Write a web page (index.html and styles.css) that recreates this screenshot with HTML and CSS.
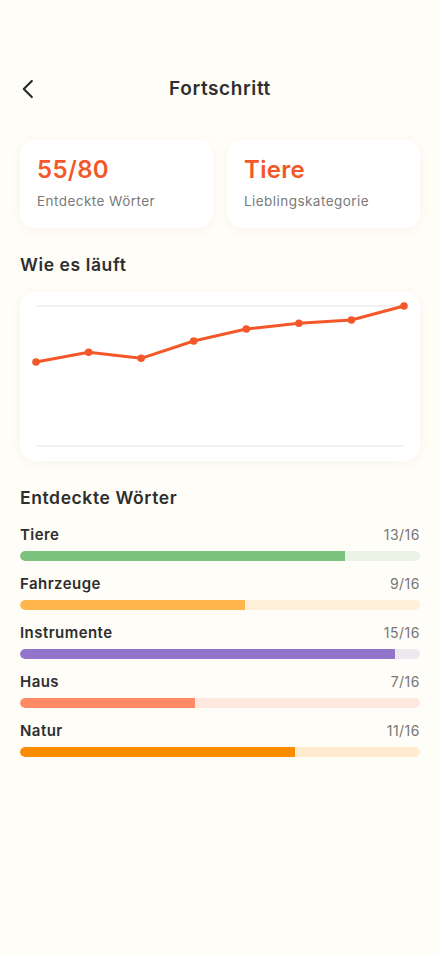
FILE: index.html
```html
<!DOCTYPE html>
<html lang="de">
<head>
<meta charset="utf-8">
<title>Fortschritt</title>
<link rel="stylesheet" href="styles.css">
</head>
<body>
<div class="page">
  <header class="header">
    <button class="back" aria-label="Zurück">
      <svg width="24" height="24" viewBox="0 0 24 24"><path d="M11.8 4 L3.8 12 L11.8 20" fill="none" stroke="#2b2b2b" stroke-width="2.2" stroke-linecap="round" stroke-linejoin="round"/></svg>
    </button>
    <h1 class="title">Fortschritt</h1>
  </header>

  <section class="stats">
    <div class="card stat">
      <div class="stat-value">55/80</div>
      <div class="stat-label">Entdeckte Wörter</div>
    </div>
    <div class="card stat">
      <div class="stat-value">Tiere</div>
      <div class="stat-label">Lieblingskategorie</div>
    </div>
  </section>

  <h2 class="section-title first">Wie es läuft</h2>
  <div class="card chart">
    <svg width="400" height="169" viewBox="0 0 400 169">
      <line x1="16" y1="14" x2="384" y2="14" stroke="#ECECF1" stroke-width="1.5"/>
      <line x1="16" y1="154" x2="384" y2="154" stroke="#ECECF1" stroke-width="1.5"/>
      <polyline fill="none" stroke="#F4572A" stroke-width="3" stroke-linejoin="round" stroke-linecap="round"
        points="16,70 68.6,60.3 121.1,66.3 173.7,49 226.3,37 278.9,31.3 331.4,28 384,14"/>
      <g fill="#F4572A">
        <circle cx="16" cy="70" r="3.8"/>
        <circle cx="68.6" cy="60.3" r="3.8"/>
        <circle cx="121.1" cy="66.3" r="3.8"/>
        <circle cx="173.7" cy="49" r="3.8"/>
        <circle cx="226.3" cy="37" r="3.8"/>
        <circle cx="278.9" cy="31.3" r="3.8"/>
        <circle cx="331.4" cy="28" r="3.8"/>
        <circle cx="384" cy="14" r="3.8"/>
      </g>
    </svg>
  </div>

  <h2 class="section-title">Entdeckte Wörter</h2>
  <ul class="progress-list">
    <li class="progress-row">
      <div class="row-head"><span class="row-label">Tiere</span><span class="row-count">13/16</span></div>
      <div class="track green"><div class="fill" style="width:81.25%"></div></div>
    </li>
    <li class="progress-row">
      <div class="row-head"><span class="row-label">Fahrzeuge</span><span class="row-count">9/16</span></div>
      <div class="track amber"><div class="fill" style="width:56.25%"></div></div>
    </li>
    <li class="progress-row">
      <div class="row-head"><span class="row-label">Instrumente</span><span class="row-count">15/16</span></div>
      <div class="track purple"><div class="fill" style="width:93.75%"></div></div>
    </li>
    <li class="progress-row">
      <div class="row-head"><span class="row-label">Haus</span><span class="row-count">7/16</span></div>
      <div class="track coral"><div class="fill" style="width:43.75%"></div></div>
    </li>
    <li class="progress-row">
      <div class="row-head"><span class="row-label">Natur</span><span class="row-count">11/16</span></div>
      <div class="track orange"><div class="fill" style="width:68.75%"></div></div>
    </li>
  </ul>
</div>
</body>
</html>
```

FILE: styles.css
```css
* { box-sizing: border-box; }
html, body { margin: 0; padding: 0; }
body {
  background: #FFFDF7;
  font-family: Inter, "Noto Sans", "Liberation Sans", sans-serif;
  color: #2B2B2B;
  width: 440px;
  min-height: 956px;
}
.page { padding: 67px 20px 0; }

.header {
  position: relative;
  height: 44px;
  display: flex;
  align-items: center;
  justify-content: center;
}
.back {
  position: absolute;
  left: 0;
  top: 10px;
  width: 24px;
  height: 24px;
  padding: 0;
  border: 0;
  background: none;
  display: flex;
}
.title {
  margin: 0;
  font-size: 19px;
  font-weight: 600;
  line-height: 44px;
  letter-spacing: 0.6px;
  color: #2E2E2E;
}

.stats {
  margin-top: 29px;
  display: grid;
  grid-template-columns: 1fr 1fr;
  gap: 14px;
}
.card {
  background: #FFFFFF;
  border-radius: 15px;
  box-shadow: 0 2px 12px rgba(120, 100, 60, 0.06);
}
.stat {
  height: 88px;
  padding: 15px 17px 0;
}
.stat-value {
  font-size: 24px;
  font-weight: 600;
  line-height: 30px;
  letter-spacing: 0.3px;
  color: #F2592A;
}
.stat-label {
  margin-top: 7px;
  font-size: 13.5px;
  line-height: 18px;
  letter-spacing: 0.45px;
  color: #7A7A7A;
}

.section-title {
  margin: 25px 0 0;
  font-size: 17.5px;
  font-weight: 600;
  line-height: 24px;
  letter-spacing: 0.6px;
  color: #2E2E2E;
}
.section-title.first { margin-top: 25px; }

.chart {
  margin-top: 15px;
  height: 169px;
  overflow: hidden;
}
.chart svg { display: block; }

.progress-list {
  list-style: none;
  margin: 14px 0 0;
  padding: 0;
}
.progress-row { margin-bottom: 12px; }
.row-head {
  display: flex;
  justify-content: space-between;
  align-items: center;
  height: 20px;
}
.row-label {
  font-size: 15px;
  font-weight: 600;
  letter-spacing: 0.45px;
  color: #2E2E2E;
}
.row-count {
  font-size: 14px;
  letter-spacing: 0.5px;
  color: #777777;
}
.track {
  margin-top: 7px;
  height: 10px;
  border-radius: 5px;
  overflow: hidden;
}
.fill { height: 100%; border-radius: 5px 0 0 5px; }

.green { background: #E9F3E6; }
.green .fill { background: #7CC47E; }
.amber { background: #FFF0DA; }
.amber .fill { background: #FFB74D; }
.purple { background: #ECE8EF; }
.purple .fill { background: #9374CB; }
.coral { background: #FFE9DE; }
.coral .fill { background: #FF8A65; }
.orange { background: #FFEBD0; }
.orange .fill { background: #FB8C00; }
```
